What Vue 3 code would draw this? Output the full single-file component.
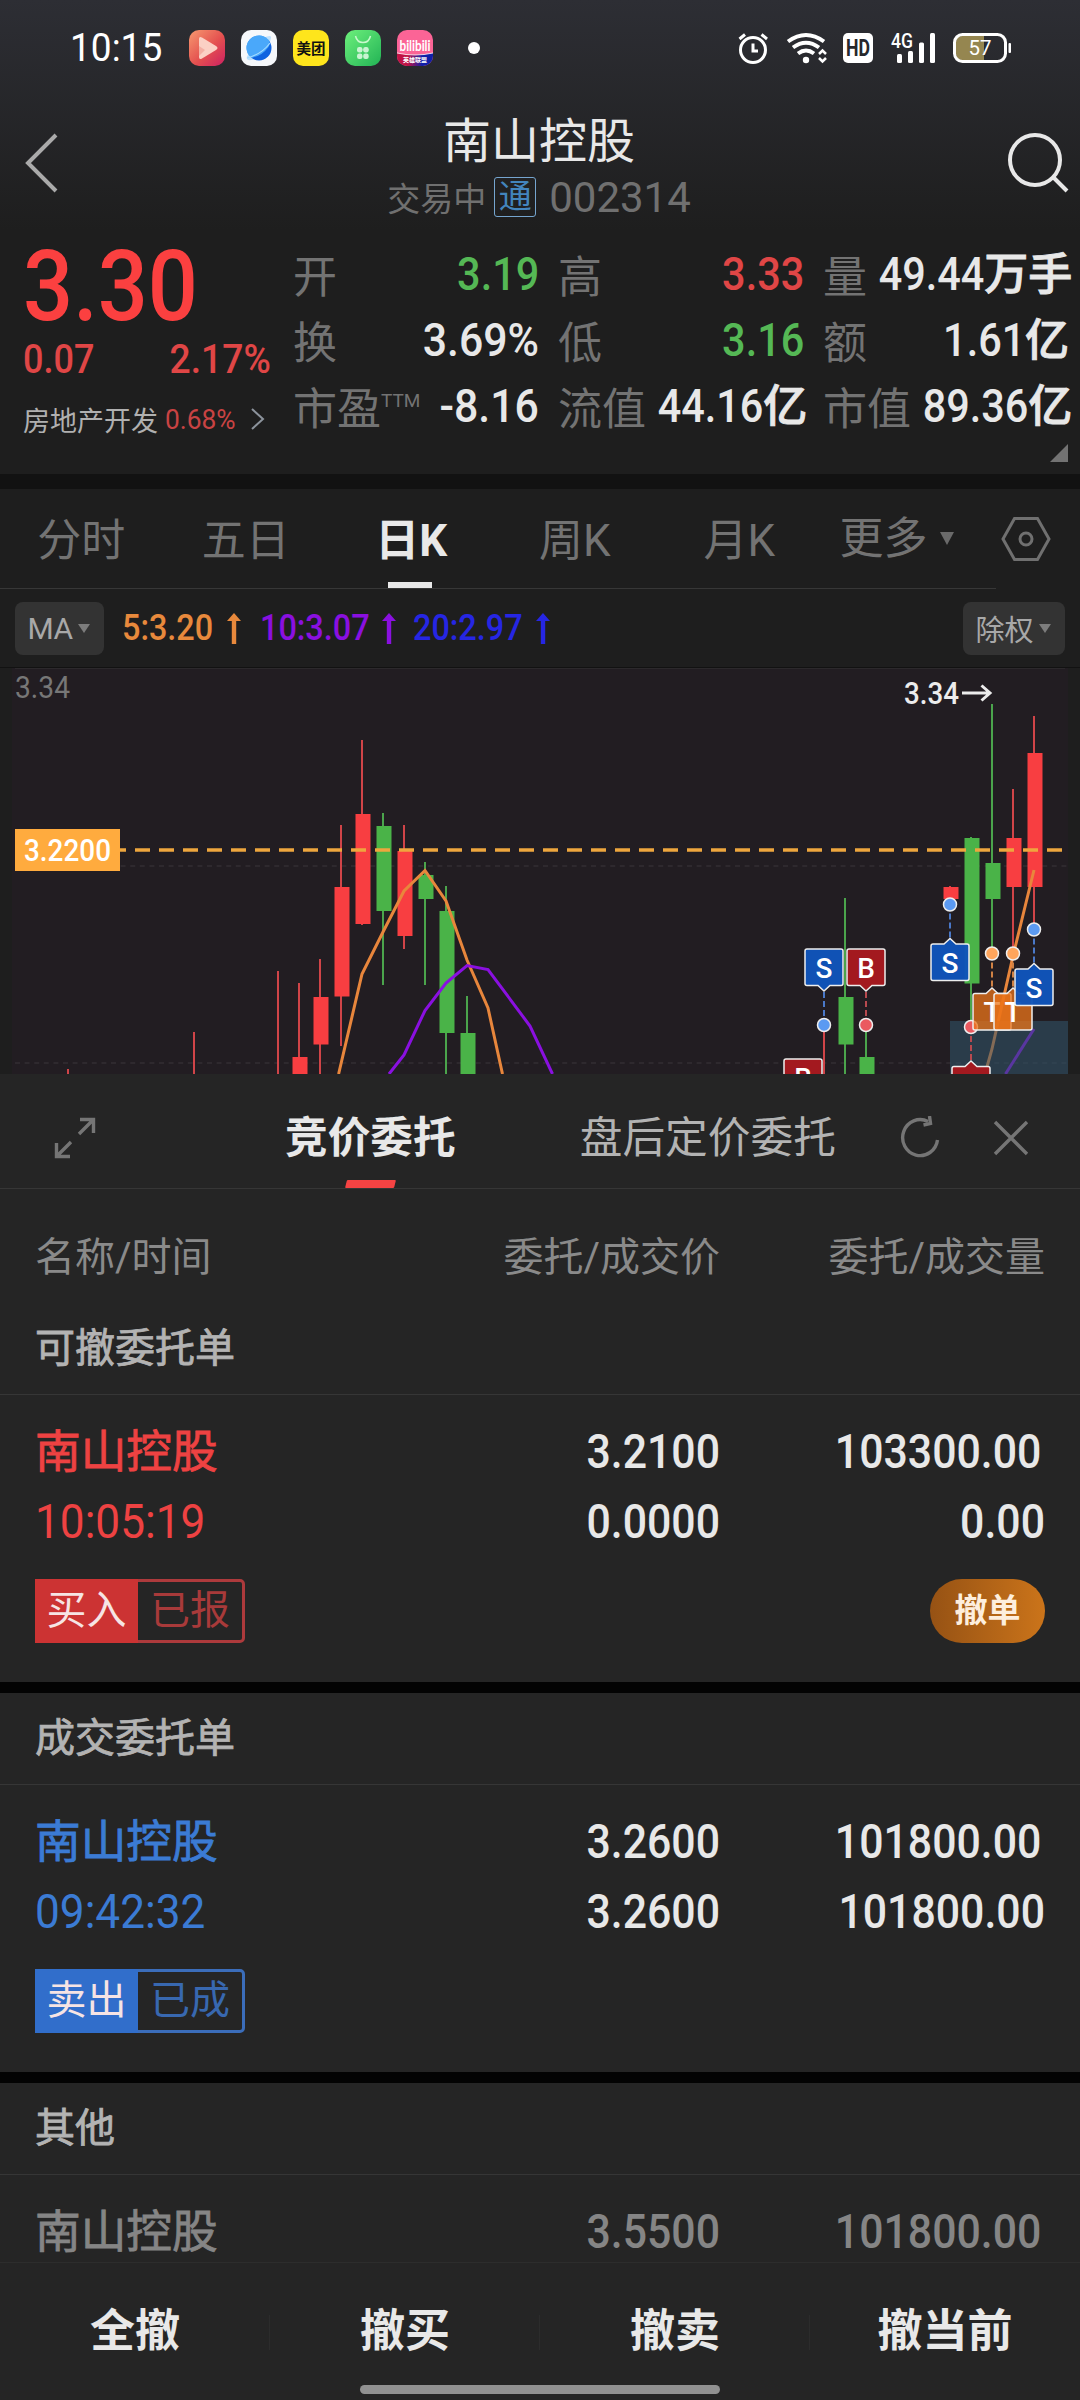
<script setup>
const stats = [
  { label: "开", value: "3.19", tone: "down" },
  { label: "高", value: "3.33", tone: "up" },
  { label: "量", value: "49.44", unit: "万手" },
  { label: "换", value: "3.69%", tone: "wide" },
  { label: "低", value: "3.16", tone: "down" },
  { label: "额", value: "1.61", unit: "亿" },
  { label: "市盈", sup: "TTM", value: "-8.16", tone: "wide" },
  { label: "流值", value: "44.16", unit: "亿" },
  { label: "市值", value: "89.36", unit: "亿" },
];
const periods = ["分时", "五日", "日K", "周K", "月K"];
const averages = [
  { text: "5:3.20", cls: "ma5" },
  { text: "10:3.07", cls: "ma10" },
  { text: "20:2.97", cls: "ma20" },
];

// x, high, low, body top, body bottom
const candles = [
  { x: 68, h: 1069, l: 1090, up: true },
  { x: 194, h: 1032, l: 1090, up: true },
  { x: 278, h: 971, l: 1090, up: true },
  { x: 299, h: 983, l: 1090, t: 1057, b: 1090, up: true },
  { x: 320, h: 959, l: 1090, t: 997, b: 1044.5, up: true },
  { x: 341, h: 825, l: 1046, t: 887, b: 996.5, up: true },
  { x: 362, h: 740, l: 925, t: 814, b: 924, up: true },
  { x: 383, h: 813, l: 985, t: 826, b: 911, up: false },
  { x: 404, h: 825, l: 949, t: 851, b: 936, up: true },
  { x: 425, h: 862, l: 985, t: 875, b: 899, up: false },
  { x: 446, h: 886, l: 1090, t: 911, b: 1033, up: false },
  { x: 467, h: 996, l: 1090, t: 1033, b: 1090, up: false },
  { x: 824, h: 1025, l: 1090, up: true },
  { x: 845, h: 898, l: 1090, t: 997, b: 1044.5, up: false },
  { x: 866, h: 1025, l: 1090, t: 1057, b: 1090, up: false },
  { x: 950, h: 886, l: 904, t: 887, b: 899, up: true },
  { x: 971, h: 837, l: 1025, t: 838, b: 983.5, up: false },
  { x: 992, h: 704, l: 953, t: 863, b: 899, up: false },
  { x: 1013, h: 789, l: 953, t: 838, b: 887, up: true },
  { x: 1034, h: 716, l: 929, t: 753, b: 887, up: true },
];
const markers = [
  { t: "B", x: 803, dot: 1140, top: 1059, below: false, cls: "buy" },
  { t: "S", x: 824, dot: 1025, top: 949, below: false, cls: "sell" },
  { t: "B", x: 866, dot: 1025, top: 949, below: false, cls: "buy" },
  { t: "S", x: 950, dot: 904.5, top: 944, below: true, cls: "sell" },
  { t: "", x: 971, dot: 1027, top: 1066.5, below: true, cls: "buy" },
  { t: "T", x: 992, dot: 953.5, top: 993.5, below: true, cls: "both" },
  { t: "T", x: 1013, dot: 953.5, top: 993.5, below: true, cls: "both" },
  { t: "S", x: 1034, dot: 929.5, top: 969, below: true, cls: "sell" },
];
const flag = (m) => {
  const l = m.x - 19;
  const r = m.x + 19;
  const b = m.top + 36.5;
  return m.below
    ? `M${l + 2} ${m.top}H${m.x - 6}L${m.x} ${m.top - 5.5}L${m.x + 6} ${m.top}H${r - 2}Q${r} ${m.top} ${r} ${m.top + 2}V${b - 2}Q${r} ${b} ${r - 2} ${b}H${l + 2}Q${l} ${b} ${l} ${b - 2}V${m.top + 2}Q${l} ${m.top} ${l + 2} ${m.top}Z`
    : `M${l + 2} ${m.top}H${r - 2}Q${r} ${m.top} ${r} ${m.top + 2}V${b - 2}Q${r} ${b} ${r - 2} ${b}H${m.x + 6}L${m.x} ${b + 5.5}L${m.x - 6} ${b}H${l + 2}Q${l} ${b} ${l} ${b - 2}V${m.top + 2}Q${l} ${m.top} ${l + 2} ${m.top}Z`;
};

const groups = [
  {
    title: "可撤委托单",
    cls: "red",
    price: "3.2100",
    amount: "103300.00",
    deal: { time: "10:05:19", price: "0.0000", amount: "0.00" },
    side: "买入",
    state: "已报",
    cancel: true,
  },
  {
    title: "成交委托单",
    cls: "blue",
    price: "3.2600",
    amount: "101800.00",
    deal: { time: "09:42:32", price: "3.2600", amount: "101800.00" },
    side: "卖出",
    state: "已成",
  },
  {
    title: "其他",
    cls: "gray",
    price: "3.5500",
    amount: "101800.00",
  },
];
const actions = ["全撤", "撤买", "撤卖", "撤当前"];
</script>

<template>
  <div class="screen">
    <header class="top">
      <div class="status">
        <span class="clock"><span class="num">10:15</span></span>
        <div class="apps">
          <svg viewBox="0 0 36 36">
            <defs>
              <linearGradient id="g1" x1="0" y1="0" x2="1" y2="1">
                <stop offset="0" stop-color="#f79a70" />
                <stop offset=".55" stop-color="#e4504f" />
                <stop offset="1" stop-color="#cc2062" />
              </linearGradient>
            </defs>
            <rect width="36" height="36" rx="10" fill="url(#g1)" />
            <path d="M10 9q0-3 3-1.500l14 8.500q3 2 0 4l-14 8.500q-3 1.500-3-1.500z" fill="#fbd0c4" />
            <path d="M10 16l6 4-6 6z" fill="#f4b0a4" />
          </svg>
          <svg viewBox="0 0 36 36">
            <defs>
              <linearGradient id="g2" x1="0" y1="0" x2="1" y2="1">
                <stop offset="0" stop-color="#2f86ee" />
                <stop offset=".5" stop-color="#5cbcff" />
                <stop offset=".6" stop-color="#0f63e0" />
              </linearGradient>
            </defs>
            <rect width="36" height="36" rx="10" fill="#f6f8fb" />
            <path d="M22 8q9-4 8 0-1 9-11 17T6 29q-1-2 3-7z" fill="#bfe0fb" />
            <circle cx="18" cy="18" r="12.500" fill="url(#g2)" />
            <path d="M5.700 15.500A12.500 12.500 0 0 1 27 9.500Q30 12 27.500 17 20 27 10 27.500 4.500 22 5.700 15.500z" fill="#4aa8fa" />
            <path d="M6 28q15-4 23-15" fill="none" stroke="#a5dbff" stroke-width="1.200" />
          </svg>
          <svg viewBox="0 0 36 36">
            <rect width="36" height="36" rx="10" fill="#fee51c" />
            <text x="18" y="23.500" class="meituan">美团</text>
          </svg>
          <svg viewBox="0 0 36 36">
            <defs>
              <linearGradient id="g3" x1="0" y1="0" x2="1" y2="1">
                <stop offset="0" stop-color="#6df07c" />
                <stop offset="1" stop-color="#22b355" />
              </linearGradient>
            </defs>
            <rect width="36" height="36" rx="10" fill="url(#g3)" />
            <path d="M10.500 6q1.500 6.500 7.500 6.500T25.500 6" fill="none" stroke="#c8f9cd" stroke-width="1.500" />
            <g fill="#c9f4d2">
              <rect x="12" y="17" width="5.500" height="5.500" rx="2.200" />
              <rect x="18.200" y="17" width="5.500" height="5.500" rx="2.200" />
              <rect x="12" y="23.500" width="5.500" height="5.500" rx="2.200" />
              <rect x="18.200" y="23.500" width="5.500" height="5.500" rx="2.200" />
            </g>
          </svg>
          <svg viewBox="0 0 36 36">
            <defs>
              <clipPath id="c5"><rect width="36" height="36" rx="10" /></clipPath>
              <linearGradient id="g5">
                <stop offset=".3" stop-color="#c01245" />
                <stop offset=".7" stop-color="#0f1fa8" />
              </linearGradient>
            </defs>
            <g clip-path="url(#c5)">
              <rect width="36" height="36" fill="#fb6496" />
              <path d="M0 23q18 4 36 0v13H0z" fill="url(#g5)" />
              <path d="M0 23q18 4 36 0" fill="none" stroke="#fff" stroke-width=".8" />
              <text x="2.500" y="20.500" class="bili" textLength="31" lengthAdjust="spacingAndGlyphs">bilibili</text>
              <text x="18" y="32" class="bili-sub">英雄联盟</text>
            </g>
          </svg>
        </div>
        <i class="dot"></i>
        <svg class="sys" viewBox="730 30 290 36">
          <g fill="none" stroke="#fff" stroke-width="3">
            <circle cx="753" cy="50" r="12.500" />
            <path d="M753 43.500v7.500h5M739.500 39l5.500-4.500M767 39l-5.500-4.500" />
            <path d="M788 41.500q18-13 36 0M793 47.500q13-9.500 26 0M798 53.500q8-6 16 0" stroke-width="4" />
            <path d="M819 54l3.500-3.500 3.500 3.500M819 58l3.500 3.500 3.500-3.500" stroke-width="2.500" />
          </g>
          <circle cx="806" cy="60" r="3.200" fill="#fff" />
          <rect x="843" y="33" width="30" height="30" rx="5" fill="#fff" />
          <text x="846" y="56" class="hd" textLength="24" lengthAdjust="spacingAndGlyphs">HD</text>
          <text x="891" y="48" class="net" textLength="22" lengthAdjust="spacingAndGlyphs">4G</text>
          <g fill="#fff">
            <rect x="897" y="54" width="5" height="9" rx="1.500" />
            <rect x="908" y="51" width="5" height="12" rx="1.500" />
            <rect x="919" y="42.500" width="5" height="20.500" rx="1.500" />
            <rect x="930" y="33" width="5" height="30" rx="1.500" />
            <rect x="1008.500" y="43" width="2.500" height="10" rx="1" />
          </g>
          <path d="M962 36h22v24h-22q-6 0-6-6V42q0-6 6-6z" fill="#958650" />
          <rect x="954.500" y="34.500" width="51" height="27" rx="8" fill="none" stroke="#fff" stroke-width="3" />
          <text x="968.500" y="55" class="bat" textLength="23" lengthAdjust="spacingAndGlyphs">57</text>
        </svg>
      </div>
      <div class="title-bar">
        <svg class="back" viewBox="0 0 40 64"><path d="M34 4L6 32 34 60" /></svg>
        <div class="heading">
          <h1>南山控股</h1>
          <p>
            <span>交易中</span>
            <b class="tong">通</b>
            <span class="code">002314</span>
          </p>
        </div>
        <svg class="search" viewBox="0 0 64 64">
          <circle cx="29" cy="28" r="25" />
          <path d="M47.500 45.500L61 59" />
        </svg>
      </div>
    </header>

    <section class="quote">
      <div class="last">
        <div class="price"><span class="num">3.30</span></div>
        <div class="change"><span class="num">0.07</span><span class="num end">2.17%</span></div>
        <div class="sector">
          <span>房地产开发</span>
          <span class="pct"><span class="num">0.68%</span></span>
          <svg viewBox="0 0 14 22"><path d="M1 1l11 10L1 21" /></svg>
        </div>
      </div>
      <div class="stats">
        <div v-for="s in stats" :key="s.label" class="stat">
          <span class="label">{{ s.label }}<sup v-if="s.sup">{{ s.sup }}</sup></span>
          <span class="value" :class="s.tone"><span class="num end">{{ s.value }}</span><em v-if="s.unit">{{ s.unit }}</em></span>
        </div>
      </div>
      <i class="corner"></i>
    </section>

    <nav class="periods">
      <div class="period-list">
        <span v-for="p in periods" :key="p" class="period" :class="{ active: p === '日K' }">{{ p }}</span>
        <span class="more">更多<i class="caret"></i></span>
      </div>
      <svg class="setting" viewBox="0 0 50 44">
        <path d="M13.500 1.500h23L48 22 36.500 42.500h-23L2 22z" />
        <circle cx="25" cy="22" r="6" />
      </svg>
    </nav>

    <div class="indicators">
      <span class="chip ma">MA<i class="caret small"></i></span>
      <span v-for="a in averages" :key="a.cls" class="avg" :class="a.cls">
        <span class="num">{{ a.text }}</span>
        <svg viewBox="0 0 14 31"><path d="M7 0l7 8H9.200v23H4.800V8H0z" /></svg>
      </span>
      <span class="chip right">除权<i class="caret small"></i></span>
    </div>

    <svg class="chart" viewBox="0 667 1080 407">
      <rect x="0" y="667" width="1080" height="407" fill="#1e1e1e" />
      <rect x="12" y="668" width="1056" height="406" fill="#221d22" />
      <path d="M0 667.500H1080" stroke="#121212" />
      <path d="M15 668.500H1065" stroke="#2c292c" />
      <path d="M15 866H1068M15 1063H1068" stroke="#2e292e" stroke-width="2" stroke-dasharray="5 4.600" />
      <g v-for="c in candles" :key="c.x" :class="c.up ? 'rise' : 'fall'">
        <path :d="`M${c.x} ${c.h}V${c.l}`" />
        <rect v-if="c.t" :x="c.x - 6.500" :y="c.t" width="15" :height="c.b - c.t" />
      </g>
      <path class="l5" d="M338.600 1074L362 974 383 932 404 891 425 870.500 446 901 467 960 488 1008 502.500 1074" />
      <path class="l10" d="M389 1074L404 1055 425 1010.500 446 983 467 965.500 488 969.500 530 1026 552.500 1074" />
      <path class="l5" d="M1034 870L1013 956 992 1049 985 1074" />
      <path class="l10" d="M1034 1029L1005.500 1074" />
      <path class="cost" d="M111 850H1062" />
      <rect x="15" y="829" width="105" height="42" fill="#ffab3e" />
      <text x="24" y="861" class="c-cost" textLength="87" lengthAdjust="spacingAndGlyphs">3.2200</text>
      <text x="15" y="697.500" class="c-max" textLength="55" lengthAdjust="spacingAndGlyphs">3.34</text>
      <text x="904" y="704" class="c-high" textLength="55" lengthAdjust="spacingAndGlyphs">3.34</text>
      <path d="M962 693h28M981.500 685.500l8.500 7.500-8.500 7.500" fill="none" stroke="#ececec" stroke-width="3" />
      <rect x="950" y="1021" width="118" height="53" fill="#32566b" opacity=".55" />
      <g v-for="(m, i) in markers" :key="i" :class="m.cls">
        <path class="link" :d="`M${m.x} ${m.dot}V${m.below ? m.top - 5 : m.top + 42}`" />
        <circle :cx="m.x" :cy="m.dot" r="6.500" />
        <path class="flag" :d="flag(m)" />
        <text v-if="m.t" :x="m.x" :y="m.top + 28.500">{{ m.t }}</text>
      </g>
    </svg>

    <section class="panel">
      <div class="panel-tabs">
        <svg class="expand" viewBox="0 0 42 42">
          <path d="M25 17L39 3M26 2.500h13.500V16M17 25L3 39M2.500 26v13.500H16" />
        </svg>
        <span class="ptab on">竞价委托</span>
        <span class="ptab">盘后定价委托</span>
        <svg class="refresh" viewBox="0 0 40 44">
          <path d="M28 5.500A17.500 18 0 1 0 37.500 24" />
          <path d="M29.500 0l1 7.500-7 1.500" />
        </svg>
        <svg class="close" viewBox="0 0 36 36"><path d="M2 2l32 32M34 2L2 34" /></svg>
      </div>
      <div class="cols">
        <span>名称/时间</span><span>委托/成交价</span><span>委托/成交量</span>
      </div>
      <div class="orders">
        <div v-for="g in groups" :key="g.title" class="group" :class="g.cls">
          <h2>{{ g.title }}</h2>
          <div class="order">
            <div class="line first">
              <span class="name">南山控股</span>
              <span class="num end">{{ g.price }}</span>
              <span class="num end">{{ g.amount }}</span>
            </div>
            <div v-if="g.deal" class="line">
              <span class="time"><span class="num">{{ g.deal.time }}</span></span>
              <span class="num end">{{ g.deal.price }}</span>
              <span class="num end">{{ g.deal.amount }}</span>
            </div>
            <div v-if="g.side" class="foot">
              <span class="tag"><b>{{ g.side }}</b><i>{{ g.state }}</i></span>
              <button v-if="g.cancel">撤单</button>
            </div>
          </div>
        </div>
      </div>
      <footer>
        <div class="actions">
          <span v-for="a in actions" :key="a">{{ a }}</span>
        </div>
        <i class="home"></i>
      </footer>
    </section>
  </div>
</template>

<style>
body {
  margin: 0;
  background: #1e1e1e;
}
</style>

<style scoped>
.screen {
  width: 1080px;
  height: 2400px;
  overflow: hidden;
  display: flex;
  flex-direction: column;
  background: #1e1e1e;
  color: #e8e8e8;
  font-family: Roboto, "Noto Sans CJK SC", sans-serif;
}
.screen * {
  box-sizing: border-box;
}
i,
em {
  font-style: normal;
}
.num {
  display: inline-block;
  transform: scaleX(0.9);
  transform-origin: left center;
}
.num.end {
  transform-origin: right center;
}
.top {
  height: 230px;
  flex: none;
  background: linear-gradient(#2d2e34, #1e1e1e);
}
.status {
  height: 96px;
  display: flex;
  align-items: center;
  padding-left: 70px;
}
.clock {
  width: 119px;
  font-size: 39px;
  color: #fff;
}
.clock .num {
  transform: scaleX(0.95);
}
.apps {
  display: flex;
  gap: 16px;
}
.apps svg {
  width: 36px;
  height: 36px;
}
.meituan {
  font: 700 14.5px "Noto Sans CJK SC", sans-serif;
  text-anchor: middle;
  fill: #111;
}
.bili {
  font: 700 15px Lato, sans-serif;
  fill: #fff;
}
.bili-sub {
  font: 700 6px "Noto Sans CJK SC", sans-serif;
  text-anchor: middle;
  fill: #fff;
}
.dot {
  width: 12px;
  height: 12px;
  margin-left: 35px;
  border-radius: 50%;
  background: #fff;
}
.sys {
  width: 290px;
  height: 36px;
  margin-left: 250px;
}
.hd {
  font: 700 23px Roboto, sans-serif;
  fill: #26272b;
}
.net {
  font: 500 20px Roboto, sans-serif;
  fill: #fff;
}
.bat {
  font: 400 21px Roboto, sans-serif;
  fill: #fff;
}
.title-bar {
  height: 134px;
  display: flex;
  justify-content: space-between;
  padding: 0 10px 0 22px;
}
.title-bar svg {
  fill: none;
  stroke: #e8e8e8;
  stroke-width: 4;
}
.back {
  width: 40px;
  height: 64px;
  margin-top: 35px;
}
.title-bar .back {
  stroke: #aaa;
}
.search {
  width: 64px;
  height: 64px;
  margin-top: 36px;
}
.heading {
  display: flex;
  flex-direction: column;
  align-items: center;
  padding-left: 10px;
}
h1 {
  margin: 15px 0 0;
  font-size: 48px;
  font-weight: 400;
  line-height: 62px;
}
.heading p {
  margin: 4px 0 0;
  display: flex;
  align-items: center;
  height: 40px;
  font-size: 33px;
  color: #707070;
}
.tong {
  width: 42px;
  height: 40px;
  margin: 0 13px 0 8px;
  border: 1.5px solid #75a5cf;
  border-radius: 3px;
  font-weight: 400;
  line-height: 37px;
  text-align: center;
  color: #4385bd;
}
.code {
  font-size: 42px;
}
.quote {
  position: relative;
  height: 259px;
  flex: none;
  display: flex;
  padding-top: 11px;
  border-bottom: 15px solid #121212;
}
.last {
  width: 293px;
  padding-left: 23px;
}
.price {
  height: 90px;
  font-size: 98px;
  font-weight: 500;
  line-height: 92px;
  color: #fb4040;
}
.change {
  display: flex;
  justify-content: space-between;
  width: 248px;
  font-size: 40px;
  font-weight: 500;
  line-height: 57px;
  color: #e04646;
}
.change .end {
  transform: scaleX(0.93);
}
.sector {
  display: flex;
  align-items: center;
  height: 62px;
  font-size: 27px;
  color: #b0b0b0;
}
.pct {
  width: 86px;
  margin-left: 7px;
  font-size: 28px;
  color: #c94343;
}
.pct .num {
  transform: scaleX(0.94);
}
.sector svg {
  width: 14px;
  height: 22px;
  fill: none;
  stroke: #8c939c;
  stroke-width: 2;
}
.stats {
  display: grid;
  grid-template-columns: repeat(3, 246px);
  grid-auto-rows: 66px;
  column-gap: 19px;
}
.stat {
  display: flex;
  justify-content: space-between;
  line-height: 66px;
  white-space: nowrap;
}
.label {
  padding-top: 4px;
  font-size: 44px;
  color: #737373;
}
.label sup {
  font-size: 19px;
  line-height: 0;
  vertical-align: 18px;
}
.value {
  font-size: 46px;
  font-weight: 500;
}
.value em {
  font-size: 44px;
  -webkit-text-stroke: 0.9px;
}
.value.wide .num {
  transform: scaleX(0.93);
}
.value.up {
  color: #e04646;
}
.value.down {
  color: #55b855;
}
.corner {
  position: absolute;
  right: 12px;
  bottom: 12px;
  border-left: 18px solid transparent;
  border-bottom: 18px solid #737373;
}
.periods {
  height: 100px;
  flex: none;
  display: flex;
  align-items: center;
}
.period-list {
  width: 996px;
  height: 100px;
  display: flex;
  border-bottom: 1px solid #373737;
  font-size: 44px;
  line-height: 104px;
  color: #737373;
}
.period {
  position: relative;
  width: 164.5px;
  padding-right: 2px;
  text-align: center;
}
.period.active {
  padding-right: 0;
  color: #e8e8e8;
  font-weight: 700;
}
.period.active::after {
  content: "";
  position: absolute;
  left: 59px;
  bottom: 0;
  width: 44px;
  height: 6px;
  background: #e8e8e8;
}
.more {
  display: flex;
  align-items: center;
  padding-left: 17px;
}
.caret {
  margin-left: 12px;
  border: 7.5px solid transparent;
  border-top: 13px solid #6a6a6a;
  border-bottom: 0;
}
.caret.small {
  margin-left: 5px;
  border-width: 9px 6.5px 0;
  border-top-color: #7c7c7c;
}
.setting {
  width: 50px;
  height: 44px;
  margin-left: 5px;
  fill: none;
  stroke: #707070;
  stroke-width: 3;
}
.indicators {
  height: 78px;
  flex: none;
  display: flex;
  align-items: center;
  padding: 0 15px;
}
.chip {
  height: 53px;
  display: flex;
  align-items: center;
  justify-content: center;
  border-radius: 8px;
  background: #333;
  font-size: 30px;
  color: #a8a8a8;
}
.chip.ma {
  width: 89px;
  margin-right: 18px;
  padding-right: 2px;
  letter-spacing: -0.5px;
}
.chip.right {
  width: 102px;
  margin-left: auto;
  padding-right: 2px;
  font-size: 29px;
}
.avg {
  display: flex;
  align-items: center;
  justify-content: space-between;
  font-size: 36px;
  font-weight: 500;
}
.avg .num {
  margin-right: -12px;
}
.avg svg {
  width: 14px;
  height: 31px;
  fill: currentColor;
}
.avg.ma5 {
  width: 119px;
  margin-right: 19px;
  color: #e8893c;
}
.avg.ma10 {
  width: 136px;
  margin-right: 17px;
  color: #8a10e0;
}
.avg.ma20 {
  width: 137px;
  color: #2626e4;
}
.chart {
  display: block;
  width: 1080px;
  height: 407px;
  flex: none;
}
.chart path {
  fill: none;
}
.rise path {
  stroke: #d04448;
  stroke-width: 2;
}
.rise rect {
  fill: #f83e41;
}
.fall path {
  stroke: #4ba44c;
  stroke-width: 2;
}
.fall rect {
  fill: #4ab348;
}
.l5 {
  stroke: #e8863c;
  stroke-width: 3;
}
.l10 {
  stroke: #8a10e0;
  stroke-width: 3;
}
.cost {
  stroke: #eea63e;
  stroke-width: 3.5;
  stroke-dasharray: 15 9;
}
.chart text {
  font-family: Roboto, sans-serif;
  font-weight: 500;
  font-size: 31px;
}
.c-cost {
  fill: #fff;
}
.chart .c-max {
  fill: #777;
  font-weight: 400;
}
.c-high {
  fill: #ececec;
}
.chart .buy text,
.chart .sell text,
.chart .both text {
  font-size: 28px;
  fill: #fff;
  text-anchor: middle;
}
.chart .link {
  stroke-width: 2;
  stroke-dasharray: 6 3;
}
.chart circle {
  stroke: #eee;
  stroke-width: 1.5;
}
.chart .flag {
  stroke: #eee;
  stroke-width: 1.5;
}
.sell .link {
  stroke: #4a78c8;
}
.sell circle {
  fill: #5b9af2;
}
.chart .sell .flag {
  fill: rgba(16, 84, 186, 0.97);
}
.buy .link {
  stroke: #b84a50;
}
.buy circle {
  fill: #ea5a60;
}
.chart .buy .flag {
  fill: #a3191f;
}
.both .link {
  stroke: #cf8144;
}
.both circle {
  fill: #ffa55c;
}
.chart .both .flag {
  fill: rgba(236, 116, 26, 0.75);
}
.panel {
  flex: 1;
  min-height: 0;
  display: flex;
  flex-direction: column;
  background: #252525;
}
.panel-tabs {
  height: 115px;
  flex: none;
  display: flex;
  align-items: center;
  padding: 14px 51px 0 54px;
  border-bottom: 1px solid #363636;
}
.panel-tabs svg {
  fill: none;
  stroke: #757575;
  stroke-width: 3.4;
}
.expand {
  width: 42px;
  height: 42px;
}
.ptab {
  position: relative;
  font-size: 42.7px;
  line-height: 102px;
  color: #b3b3b3;
}
.ptab.on {
  margin: 0 124px 0 189px;
  color: #e8e8e8;
  font-weight: 700;
}
.ptab.on::after {
  content: "";
  position: absolute;
  left: 61px;
  bottom: 1px;
  width: 49px;
  height: 8px;
  border-radius: 1px;
  background: #f54343;
  transform: skewX(-14deg);
}
.refresh {
  width: 40px;
  height: 44px;
  margin-left: auto;
}
.close {
  width: 36px;
  height: 36px;
  margin-left: 53px;
}
.cols,
.line {
  display: grid;
  grid-template-columns: 335px 350px 325px;
  padding: 0 35px;
}
.cols {
  height: 114px;
  flex: none;
  padding-top: 22px;
  font-size: 40px;
  line-height: 94px;
  color: #8a8a8a;
}
.cols span + span,
.line > span + span {
  text-align: right;
}
.orders {
  flex: 1;
  min-height: 0;
  overflow: hidden;
}
.group {
  border-bottom: 11.5px solid #030303;
}
h2 {
  height: 92px;
  margin: 0;
  padding-left: 35px;
  border-bottom: 1px solid #363636;
  font-size: 40px;
  font-weight: 400;
  line-height: 91px;
  color: #b3b3b3;
  -webkit-text-stroke: 0.8px;
}
.order {
  height: 287px;
  padding-top: 22px;
}
.line {
  font-size: 48px;
  font-weight: 500;
  line-height: 69px;
}
.line .num.end {
  transform: scaleX(0.892);
}
.line.first .num:last-child {
  padding-right: 4px;
}
.name {
  padding-top: 1px;
  font-size: 45.7px;
  font-weight: 400;
  -webkit-text-stroke: 0.8px;
}
.time {
  font-weight: 400;
}
.time .num {
  transform: scaleX(0.92);
}
.red .name,
.red .time {
  color: #ee4242;
}
.blue .name,
.blue .time {
  color: #3b7bd4;
}
.gray .line {
  color: #858585;
}
.foot {
  display: flex;
  justify-content: space-between;
  padding: 23px 35px 0;
}
.tag {
  width: 210px;
  height: 64px;
  display: flex;
  border: 3px solid;
  border-radius: 5px;
  font-size: 40px;
  line-height: 58px;
  text-align: center;
}
.tag b {
  width: 97px;
  margin-right: 3px;
  font-weight: 400;
  color: #f6e4e4;
}
.tag i {
  flex: 1;
}
.red .tag {
  border-color: #ad3a3c;
  color: #a83a3a;
}
.red .tag b {
  background: #cc3333;
  box-shadow: 0 0 0 3px #cc3333;
}
.blue .tag {
  border-color: #3b6dba;
  color: #3868b0;
}
.blue .tag b {
  background: #316ecb;
  box-shadow: 0 0 0 3px #316ecb;
}
button {
  width: 115px;
  height: 64px;
  padding: 0;
  border: 0;
  border-radius: 32px;
  background: linear-gradient(90deg, #965214, #cb741a);
  font: 700 33px/60px Roboto, "Noto Sans CJK SC", sans-serif;
  color: #fdeedd;
}
footer {
  height: 138px;
  flex: none;
  border-top: 1px solid #2d2d2d;
  display: flex;
  flex-direction: column;
  align-items: center;
}
.actions {
  width: 1080px;
  height: 122px;
  display: grid;
  grid-template-columns: repeat(4, 270px);
  font-size: 45px;
  font-weight: 700;
  line-height: 137px;
  text-align: center;
}
.actions span {
  background: linear-gradient(#2c2c2c, #2c2c2c) right 52px / 1px 35px no-repeat;
}
.actions span:last-child {
  background: none;
}
.home {
  width: 360px;
  height: 9px;
  border-radius: 5px;
  background: #919191;
}
</style>
